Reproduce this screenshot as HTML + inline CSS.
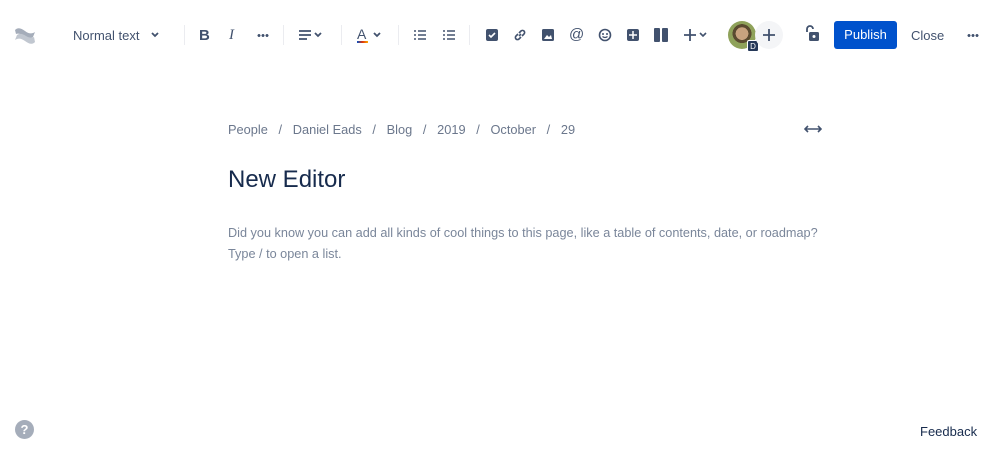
<!DOCTYPE html>
<html><head><meta charset="utf-8"><style>
*{margin:0;padding:0;box-sizing:border-box}
body{width:998px;height:455px;background:#fff;font-family:"Liberation Sans",sans-serif;color:#172b4d;position:relative;overflow:hidden}
.a{position:absolute}
.t{font-size:13px;color:#42526e}
.sep{position:absolute;top:25px;width:1px;height:20px;background:#ebecf0}
svg{position:absolute}
.dots{position:absolute;width:12px;height:3px;background:radial-gradient(circle,#42526e 1.3px,transparent 1.6px) 0 0/4px 3px repeat-x}
</style></head><body>
<svg style="left:14px;top:25px" width="22" height="22" viewBox="0 0 22 22"><path d="M1 5c3-3 6-2 10 1s7 3 10 1l-2 5c-3 2-6 1-9-1S4 8 2 9z" fill="#a5adba"/><path d="M21 17c-3 3-6 2-10-1s-7-3-10-1l2-5c3-2 6-1 9 1s6 2 8 1z" fill="#c1c7d0"/></svg>
<div class="a t" style="left:73px;top:28px;font-size:13px">Normal text</div>
<svg style="left:150px;top:31px" width="10" height="8"><path d="M2 2l3 3 3-3" stroke="#42526e" stroke-width="1.8" fill="none"/></svg>
<div class="sep" style="left:184px"></div>
<div class="a" style="left:199px;top:27px;font-weight:bold;font-size:15px;color:#42526e">B</div>
<div class="a" style="left:229px;top:27px;font-style:italic;font-size:15px;color:#42526e;font-family:'Liberation Serif'">I</div>
<div class="dots" style="left:257px;top:34px"></div>
<div class="sep" style="left:283px"></div>
<svg style="left:299px;top:29px" width="26" height="12"><path d="M0 2h12M0 6h12M0 10h8" stroke="#42526e" stroke-width="1.8"/><path d="M16 4l3 3 3-3" stroke="#42526e" stroke-width="1.8" fill="none"/></svg>
<div class="sep" style="left:341px"></div>
<div class="a" style="left:357px;top:26px;font-size:14px;color:#42526e">A</div>
<div class="a" style="left:357px;top:41px;width:11px;height:2px;background:linear-gradient(90deg,#0052cc,#de350b,#ffab00)"></div>
<svg style="left:372px;top:31px" width="10" height="8"><path d="M2 2l3 3 3-3" stroke="#42526e" stroke-width="1.8" fill="none"/></svg>
<div class="sep" style="left:398px"></div>
<svg style="left:414px;top:29px" width="12" height="12"><path d="M0 2h2M0 6h2M0 10h2M4 2h8M4 6h8M4 10h8" stroke="#42526e" stroke-width="1.6"/></svg>
<svg style="left:443px;top:29px" width="12" height="12"><path d="M0 2h2M0 6h2M0 10h2M4 2h8M4 6h8M4 10h8" stroke="#42526e" stroke-width="1.6"/></svg>
<div class="sep" style="left:469px"></div>
<svg style="left:486px;top:29px" width="12" height="12"><rect width="12" height="12" rx="2" fill="#42526e"/><path d="M3 6l2 2 4-4" stroke="#fff" stroke-width="1.6" fill="none"/></svg>
<svg style="left:513px;top:28px" width="14" height="14"><path d="M6 8l2-2M5 6L3 8a2 2 0 003 3l2-2M9 8l2-2a2 2 0 00-3-3L6 5" stroke="#42526e" stroke-width="1.6" fill="none"/></svg>
<svg style="left:542px;top:29px" width="12" height="12"><rect width="12" height="12" rx="1.5" fill="#42526e"/><path d="M2 10l3-4 2 2 2-2 1 4z" fill="#fff"/></svg>
<div class="a" style="left:569px;top:26px;font-size:15px;color:#42526e">@</div>
<svg style="left:598px;top:28px" width="14" height="14"><circle cx="7" cy="7" r="5.5" stroke="#42526e" stroke-width="1.6" fill="none"/><circle cx="5" cy="6" r="1" fill="#42526e"/><circle cx="9" cy="6" r="1" fill="#42526e"/><path d="M4.5 8.5q2.5 2 5 0" stroke="#42526e" stroke-width="1.3" fill="none"/></svg>
<svg style="left:627px;top:29px" width="12" height="12"><rect width="12" height="12" rx="2" fill="#42526e"/><path d="M6 2v8M2 6h8" stroke="#fff" stroke-width="1.5"/></svg>
<svg style="left:654px;top:28px" width="14" height="14"><rect width="6" height="14" rx="1" fill="#42526e"/><rect x="8" width="6" height="14" rx="1" fill="#42526e"/></svg>
<svg style="left:683px;top:28px" width="26" height="14"><path d="M7 1v12M1 7h12" stroke="#42526e" stroke-width="1.8"/><path d="M17 5l3 3 3-3" stroke="#42526e" stroke-width="1.6" fill="none"/></svg>
<div class="a" style="left:728px;top:21px;width:28px;height:28px;border-radius:50%;background:radial-gradient(circle at 50% 45%,#c9a37f 0 30%,#5a4a30 31% 45%,#8fa25a 46%)"></div>
<div class="a" style="left:747px;top:40px;width:12px;height:12px;border-radius:2px;background:#253858;color:#fff;font-size:8px;text-align:center;line-height:12px;border:1px solid #fff">D</div>
<div class="a" style="left:755px;top:21px;width:28px;height:28px;border-radius:50%;background:#f4f5f7"></div>
<svg style="left:762px;top:28px" width="14" height="14"><path d="M7 1v12M1 7h12" stroke="#42526e" stroke-width="1.8"/></svg>
<svg style="left:803px;top:24px" width="16" height="18"><path d="M4 8V5a3 3 0 016 0" stroke="#42526e" stroke-width="1.8" fill="none"/><rect x="6" y="8" width="10" height="9" rx="1.5" fill="#42526e"/><circle cx="11" cy="12.5" r="1.5" fill="#fff"/></svg>
<div class="a" style="left:834px;top:21px;width:63px;height:28px;background:#0052cc;border-radius:3px;color:#fff;font-size:13px;text-align:center;line-height:28px">Publish</div>
<div class="a t" style="left:911px;top:28px;font-size:13px">Close</div>
<div class="dots" style="left:967px;top:34px"></div>
<div class="a" style="left:228px;top:122px;font-size:12.8px;color:#6b778c;white-space:pre">People   /   Daniel Eads   /   Blog   /   2019   /   October   /   29</div>
<svg style="left:804px;top:124px" width="18" height="10"><path d="M1 5h16M4 2L1 5l3 3M14 2l3 3-3 3" stroke="#42526e" stroke-width="1.6" fill="none"/></svg>
<div class="a" style="left:228px;top:166px;font-size:24px;color:#172b4d">New Editor</div>
<div class="a" style="left:228px;top:223px;font-size:12.7px;color:#7a869a;line-height:21px">Did you know you can add all kinds of cool things to this page, like a table of contents, date, or roadmap?<br>Type / to open a list.</div>
<div class="a" style="left:15px;top:420px;width:19px;height:19px;border-radius:50%;background:#a5adba;color:#fff;font-size:13px;font-weight:bold;text-align:center;line-height:19px">?</div>
<div class="a" style="left:920px;top:424px;font-size:13px;color:#172b4d">Feedback</div>
</body></html>
